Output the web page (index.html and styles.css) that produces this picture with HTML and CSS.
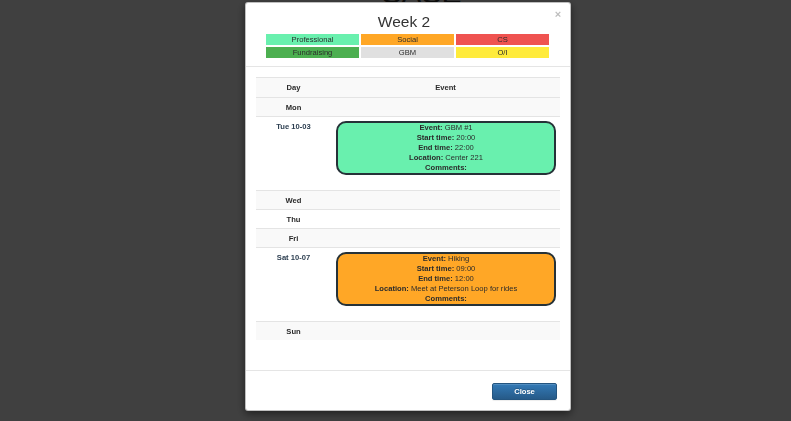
FILE: index.html
```html
<!DOCTYPE html>
<html>
<head>
<meta charset="utf-8">
<link rel="stylesheet" href="styles.css">
</head>
<body>
<h1 class="page-title">SASE</h1>
<div class="backdrop"></div>
<div class="modal">
  <div class="modal-header">
    <div class="header-top">
      <h2 class="modal-title">Week 2</h2>
      <span class="close">×</span>
    </div>
    <div class="legend">
      <div class="tag professional">Professional</div>
      <div class="tag social">Social</div>
      <div class="tag cs">CS</div>
      <div class="tag fundraising">Fundraising</div>
      <div class="tag gbm">GBM</div>
      <div class="tag oi">O/I</div>
    </div>
  </div>
  <div class="modal-body">
    <table class="week">
      <colgroup><col class="col-day"><col></colgroup>
      <thead>
        <tr class="stripe"><th>Day</th><th>Event</th></tr>
      </thead>
      <tbody>
        <tr class="stripe"><th>Mon</th><td></td></tr>
        <tr class="has-event">
          <th class="date">Tue 10-03</th>
          <td>
            <div class="event professional">
              <div><b>Event:</b> GBM #1</div>
              <div><b>Start time:</b> 20:00</div>
              <div><b>End time:</b> 22:00</div>
              <div><b>Location:</b> Center 221</div>
              <div><b>Comments:</b></div>
            </div>
          </td>
        </tr>
        <tr class="stripe"><th>Wed</th><td></td></tr>
        <tr><th>Thu</th><td></td></tr>
        <tr class="stripe"><th>Fri</th><td></td></tr>
        <tr class="has-event">
          <th class="date">Sat 10-07</th>
          <td>
            <div class="event social">
              <div><b>Event:</b> Hiking</div>
              <div><b>Start time:</b> 09:00</div>
              <div><b>End time:</b> 12:00</div>
              <div><b>Location:</b> Meet at Peterson Loop for rides</div>
              <div><b>Comments:</b></div>
            </div>
          </td>
        </tr>
        <tr class="stripe"><th>Sun</th><td></td></tr>
      </tbody>
    </table>
  </div>
  <div class="modal-footer">
    <button class="btn-close">Close</button>
  </div>
</div>
</body>
</html>
```

FILE: styles.css
```css
* { box-sizing: border-box; }

body {
  margin: 0;
  background: #ffffff;
  font-family: "Liberation Sans", Arial, sans-serif;
  color: #333;
}

.page-title {
  margin: -22px 0 0 0;
  padding-left: 52px;
  text-align: center;
  font-size: 30px;
  line-height: 30px;
  font-weight: normal;
  color: #333;
}

.backdrop {
  position: fixed;
  inset: 0;
  background: rgba(0, 0, 0, 0.75);
}

.modal {
  position: fixed;
  top: 2px;
  left: 245px;
  width: 326px;
  background: #fff;
  border: 1px solid rgba(0, 0, 0, 0.25);
  border-radius: 3px;
  box-shadow: 0 3px 9px rgba(0, 0, 0, 0.5);
}

.modal-header {
  padding: 10px 8px 8px 8px;
  border-bottom: 1px solid #e5e5e5;
}

.header-top {
  display: flex;
  align-items: flex-start;
}

.modal-title {
  flex: 1;
  margin: 0;
  text-align: center;
  font-size: 15.5px;
  line-height: 17px;
  font-weight: normal;
  color: #333;
}

.close {
  width: 8px;
  margin-top: -4px;
  font-size: 11px;
  line-height: 11px;
  font-weight: bold;
  color: #bdbdbd;
  text-align: center;
}

.legend {
  margin-top: 4px;
  display: grid;
  grid-template-columns: repeat(3, 93px);
  gap: 2px 2px;
  justify-content: center;
  margin-right: 1px;
}

.tag {
  height: 11px;
  font-size: 7.6px;
  line-height: 11px;
  text-align: center;
  color: #2b2b2b;
}

.professional { background: #69f0ae; }
.social { background: #ffa726; }
.cs { background: #ef5350; }
.fundraising { background: #4caf50; }
.gbm { background: #e0e0e0; }
.oi { background: #ffeb3b; }

.modal-body {
  padding: 10px 10px 10px 10px;
}

.week {
  width: 100%;
  margin-bottom: 20px;
  border-collapse: separate;
  border-spacing: 0;
  table-layout: fixed;
  font-size: 7.6px;
  line-height: 11px;
}

.col-day { width: 75px; }

.week th,
.week td {
  border-top: 1px solid #e4e4e4;
  padding: 4px 3px 3px;
  text-align: center;
  vertical-align: middle;
}

.week th { font-weight: bold; color: #2b2b2b; }

.week thead th { padding-bottom: 4px; }

.stripe { background: #f9f9f9; }

.has-event th,
.has-event td {
  vertical-align: top;
}

.has-event td {
  padding: 4px 4px 0 5px;
}

.week .date { color: #2c3e50; }

.event {
  margin-bottom: 15px;
  border: 2px solid #263238;
  border-radius: 10px;
  line-height: 10px;
  color: #2b2b2b;
  text-align: center;
}

.event b { font-weight: bold; }

.modal-footer {
  display: flex;
  justify-content: flex-end;
  padding: 12px 13px 10px;
  border-top: 1px solid #e5e5e5;
}

.btn-close {
  width: 65px;
  height: 17px;
  padding: 0;
  font-family: "Liberation Sans", Arial, sans-serif;
  font-size: 7.6px;
  font-weight: bold;
  color: #fff;
  background: linear-gradient(to bottom, #337ab7 0, #265a88 100%);
  border: 1px solid #245580;
  border-radius: 2px;
  text-shadow: 0 -1px 0 rgba(0, 0, 0, 0.2);
  box-shadow: inset 0 1px 0 rgba(255, 255, 255, 0.15), 0 1px 1px rgba(0, 0, 0, 0.075);
}
```
